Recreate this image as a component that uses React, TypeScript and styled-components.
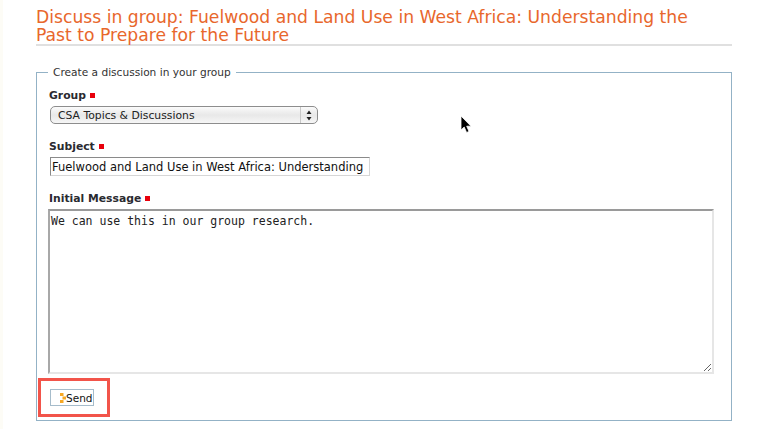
import React from 'react'
import styled, { createGlobalStyle } from 'styled-components'

const GlobalStyle = createGlobalStyle`
  html, body {
    margin: 0;
    padding: 0;
    background: #fff;
    overflow: hidden;
  }
`

const Page = styled.div`
  position: relative;
  width: 768px;
  height: 429px;
  box-sizing: border-box;
  padding: 9px 36px 0 33px;
  border-left: 3px solid #fdfcf6;
  font-family: 'DejaVu Sans', sans-serif;
  color: #222;
`

const Title = styled.h1`
  margin: 0 0 19px;
  border-bottom: 2px solid #e0e0e0;
  font-size: 17.2px;
  line-height: 17.5px;
  font-weight: 400;
  color: #e8672c;
`

const FormSet = styled.fieldset`
  margin: 0;
  padding: 9px 12px 3px 12px;
  height: 356px;
  box-sizing: border-box;
  border: 1px solid #93b2c6;
  min-width: 0;
`

const Legend = styled.legend`
  margin-left: -1px;
  padding: 0 5px;
  font-size: 10.6px;
  line-height: 14px;
  color: #333;
`

const Field = styled.div`
  display: flex;
  flex-direction: column;
  align-items: flex-start;
  margin-bottom: ${(props: { $gap: number }) => props.$gap}px;
`

const Label = styled.label`
  display: flex;
  align-items: center;
  gap: 4px;
  height: 14px;
  margin-bottom: 4px;
  font-size: 10.8px;
  font-weight: 700;
  color: #2a2a30;
`

const Required = styled.span`
  width: 5px;
  height: 5px;
  background: #e8000c;
`

const SelectBox = styled.div`
  display: flex;
  align-items: center;
  justify-content: space-between;
  width: 268px;
  height: 18px;
  margin-left: 1px;
  box-sizing: border-box;
  border: 1px solid #8d8d8d;
  border-radius: 5px;
  background: linear-gradient(#fbfbfb, #e8e8e8 50%, #f6f6f6);
  font-size: 10.8px;
  color: #222;
`

const SelectValue = styled.span`
  padding-left: 7px;
`

const SelectArrows = styled.span`
  display: flex;
  align-items: center;
  justify-content: center;
  width: 16px;
  height: 100%;
  border-left: 1px solid #c8c8c8;
`

const SubjectInput = styled.input`
  width: 320px;
  height: 19px;
  margin-left: 1px;
  padding: 0 1px;
  box-sizing: border-box;
  border: 1px solid #d6d6d6;
  border-top-color: #8a8a8a;
  border-left-color: #8a8a8a;
  outline: none;
  font-family: 'DejaVu Sans', sans-serif;
  font-size: 11.5px;
  color: #111;
`

const MessageArea = styled.textarea`
  display: block;
  width: 666px;
  height: 165px;
  margin-left: -1px;
  padding: 3px 1px;
  box-sizing: border-box;
  border: 2px solid #e6e6e6;
  border-top-color: #9a9a9a;
  border-left-color: #a8a8a8;
  outline: none;
  font-family: 'DejaVu Sans Mono', monospace;
  font-size: 11.5px;
  line-height: 14px;
  color: #222;
`

const Highlight = styled.div`
  display: inline-flex;
  margin-left: -11px;
  padding: 8px 13px 8px 9px;
  box-sizing: border-box;
  border: 3px solid #f2544a;
`

const SendButton = styled.button`
  display: flex;
  align-items: center;
  gap: 0;
  width: 44px;
  height: 17px;
  padding: 0 0 0 9px;
  box-sizing: border-box;
  border: 1px solid #a6bccb;
  background: #fff;
  font-family: 'DejaVu Sans', sans-serif;
  font-size: 10.5px;
  color: #111;
`

const Cursor = styled.svg`
  position: absolute;
  left: 456px;
  top: 114px;
`

const ArrowsIcon = () => (
  <svg width="6" height="11" viewBox="0 0 6 11">
    <path d="M3 0.5 L5.5 4 H0.5 Z M3 10.5 L0.5 7 H5.5 Z" fill="#222" />
  </svg>
)

const SendIcon = () => (
  <svg width="6" height="10" viewBox="0 0 6 10">
    <path d="M0 0h3.5v3H0z M2.5 3.5h3.5v3H2.5z M0 7h3.5v3H0z" fill="#f7a823" />
  </svg>
)

const App: React.FC = () => {
  return (
    <>
      <GlobalStyle />
      <Page>
        <Title>Discuss in group: Fuelwood and Land Use in West Africa: Understanding the<br />Past to Prepare for the Future</Title>
        <FormSet>
          <Legend>Create a discussion in your group</Legend>
          <Field $gap={15}>
            <Label>Group <Required /></Label>
            <SelectBox>
              <SelectValue>CSA Topics &amp; Discussions</SelectValue>
              <SelectArrows><ArrowsIcon /></SelectArrows>
            </SelectBox>
          </Field>
          <Field $gap={15}>
            <Label>Subject <Required /></Label>
            <SubjectInput readOnly value="Fuelwood and Land Use in West Africa: Understanding" />
          </Field>
          <Field $gap={4}>
            <Label>Initial Message <Required /></Label>
            <MessageArea readOnly value="We can use this in our group research." />
          </Field>
          <Highlight>
            <SendButton type="button"><SendIcon />Send</SendButton>
          </Highlight>
        </FormSet>
        <Cursor width="14" height="20" viewBox="0 0 14 20">
          <path d="M2 2 V16 L5.2 13 L7.6 18.5 L10 17.4 L7.7 12.2 H12 Z" fill="#000" stroke="#fff" strokeWidth="0.8" />
        </Cursor>
      </Page>
    </>
  )
}

export default App
